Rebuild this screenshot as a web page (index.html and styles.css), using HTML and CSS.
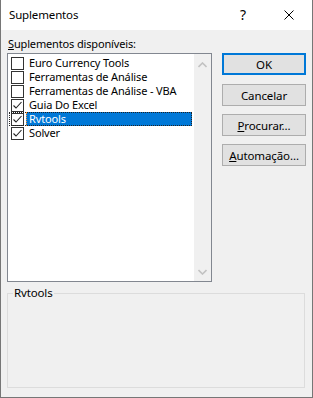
FILE: index.html
```html
<!DOCTYPE html>
<html lang="pt">
<head>
    <meta charset="UTF-8">
    <title>Suplementos</title>
    <link rel="stylesheet" href="styles.css">
</head>
<body>

<div class="window">
    <!-- Title bar -->
    <div class="titlebar">
        <span class="title">Suplementos</span>
        <span class="help">?</span>
        <span class="close">
            <svg width="10" height="10" viewBox="0 0 10 10"><path d="M0.5 0.5 L9.5 9.5 M9.5 0.5 L0.5 9.5" stroke="#000" stroke-width="1" fill="none"/></svg>
        </span>
    </div>

    <div class="main">
        <!-- Left column: list of add-ins -->
        <div class="left">
            <div class="label"><u>S</u>uplementos disponíveis:</div>
            <div class="listbox">
                <div class="items">
                    <div class="item"><span class="check"></span><span class="text">Euro Currency Tools</span></div>
                    <div class="item"><span class="check"></span><span class="text">Ferramentas de Análise</span></div>
                    <div class="item"><span class="check"></span><span class="text">Ferramentas de Análise - VBA</span></div>
                    <div class="item"><span class="check checked"><svg width="11" height="11" viewBox="0 0 11 11"><path d="M1.5 5.5 L4 8 L9.5 2" stroke="#222" stroke-width="1.1" fill="none"/></svg></span><span class="text">Guia Do Excel</span></div>
                    <div class="item selected"><span class="check checked"><svg width="11" height="11" viewBox="0 0 11 11"><path d="M1.5 5.5 L4 8 L9.5 2" stroke="#222" stroke-width="1.1" fill="none"/></svg></span><span class="text">Rvtools</span></div>
                    <div class="item"><span class="check checked"><svg width="11" height="11" viewBox="0 0 11 11"><path d="M1.5 5.5 L4 8 L9.5 2" stroke="#222" stroke-width="1.1" fill="none"/></svg></span><span class="text">Solver</span></div>
                </div>
                <div class="scrollbar">
                    <svg width="9" height="6" viewBox="0 0 9 6"><path d="M0.5 5 L4.5 1 L8.5 5" stroke="#c2c2c2" stroke-width="1.6" fill="none"/></svg>
                    <svg width="9" height="6" viewBox="0 0 9 6"><path d="M0.5 1 L4.5 5 L8.5 1" stroke="#c2c2c2" stroke-width="1.6" fill="none"/></svg>
                </div>
            </div>
        </div>

        <!-- Right column: buttons -->
        <div class="buttons">
            <button class="btn default">OK</button>
            <button class="btn">Cancelar</button>
            <button class="btn"><u>P</u>rocurar...</button>
            <button class="btn"><u>A</u>utomação...</button>
        </div>
    </div>

    <!-- Description group -->
    <fieldset class="group">
        <legend>Rvtools</legend>
    </fieldset>
</div>

</body>
</html>
```

FILE: styles.css
```css
* {
    margin: 0;
    padding: 0;
    box-sizing: border-box;
}

body {
    font-family: 'Noto Sans', sans-serif;
    font-size: 11px;
    letter-spacing: -0.15px;
    color: #000;
    background: #fff;
}

.window {
    width: 313px;
    height: 398px;
    background: #f0f0f0;
    border: 1px solid #767676;
    border-top: none;
}

/* Title bar */
.titlebar {
    height: 30px;
    background: #fff;
    display: flex;
    align-items: center;
    padding-left: 8px;
}

.title {
    flex: 1;
    font-size: 11.5px;
    margin-top: -1px;
}

.help {
    font-size: 14px;
    width: 46px;
    text-align: center;
    margin-top: -1px;
}

.close {
    width: 46px;
    height: 30px;
    display: flex;
    align-items: center;
    justify-content: center;
}

/* Main area */
.main {
    display: flex;
    padding: 0 6px;
}

.left {
    width: 205px;
}

.label {
    height: 23px;
    padding-top: 7px;
    padding-left: 1px;
    line-height: 14px;
}

.listbox {
    height: 229px;
    border: 1px solid #828790;
    background: #fff;
    display: flex;
}

.items {
    flex: 1;
    padding: 2px 1px 0 1px;
}

.item {
    display: flex;
    height: 14px;
    line-height: 14px;
    white-space: nowrap;
}

.check {
    width: 13px;
    height: 13px;
    margin: 0 2px 0 2px;
    border: 1px solid #333;
    background: #fff;
    display: flex;
    align-items: center;
    justify-content: center;
    align-self: center;
}

.text {
    flex: 1;
    padding-left: 3px;
}

.item.selected {
    outline: 1px dotted #222;
    outline-offset: -1px;
}

.item.selected .text {
    background: #0078d7;
    color: #fff;
    outline: 1px dotted #f79a3e;
    outline-offset: -1px;
}

.scrollbar {
    width: 17px;
    margin-left: 1px;
    background: #f0f0f0;
    display: flex;
    flex-direction: column;
    justify-content: space-between;
    align-items: center;
    padding: 8px 0 6px 0;
}

/* Buttons */
.buttons {
    margin-left: 10px;
    padding-top: 23px;
    display: flex;
    flex-direction: column;
}

.btn {
    width: 84px;
    height: 22px;
    margin-bottom: 8px;
    background: #e1e1e1;
    border: 1px solid #adadad;
    font-family: 'Noto Sans', sans-serif;
    font-size: 11.5px;
    letter-spacing: -0.1px;
    color: #000;
}

.btn.default {
    border: 2px solid #0078d7;
    margin-bottom: 9px;
}

/* Group box */
.group {
    margin: 5px 7px 0 6px;
    height: 101px;
    border: 1px solid #dcdcdc;
    padding: 0;
}

.group legend {
    margin-left: 5px;
    padding: 0 1px;
    line-height: 12px;
    font-size: 11.5px;
}
```
